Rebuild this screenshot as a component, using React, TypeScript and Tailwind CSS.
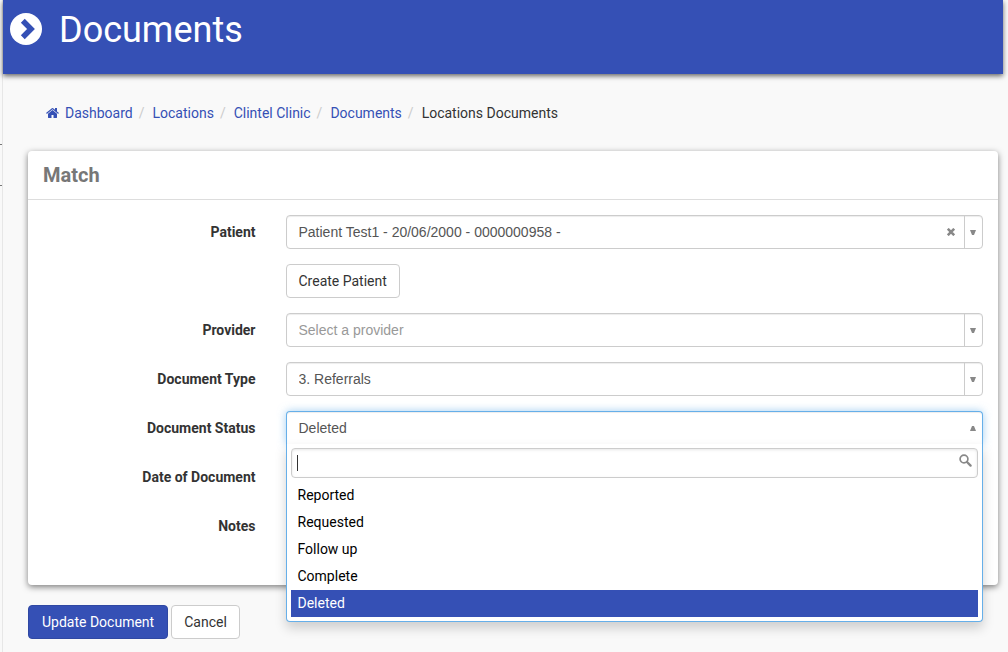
import { useState } from "react";
import type { ReactNode } from "react";

const crumbs = ["Locations", "Clintel Clinic", "Documents"];
const statuses = ["Reported", "Requested", "Follow up", "Complete", "Deleted"];

const fieldClass =
  "block h-[34px] w-full appearance-none rounded border border-[#ccc] bg-white pl-3 pr-8 font-['Liberation_Sans',Arial,sans-serif] text-sm shadow-[inset_0_1px_1px_rgba(0,0,0,0.075)] outline-none";

function ChevronCircle() {
  return (
    <svg width="32" height="32" viewBox="0 0 32 32" className="mt-[5px]" aria-hidden="true">
      <circle cx="16" cy="16" r="16" fill="#fff" />
      <path d="M12.800 7.800L21 16L12.800 24.200" fill="none" stroke="#3550b5" strokeWidth="5.5" />
    </svg>
  );
}

function HomeIcon() {
  return (
    <svg width="13" height="14" viewBox="0 0 1664 1792" fill="currentColor" aria-hidden="true">
      <path d="M1408 992v480q0 26-19 45t-45 19h-384v-384h-256v384h-384q-26 0-45-19t-19-45v-480q0-1 .5-3t.5-3l575-474 575 474q1 2 1 6zm223-69l-62 74q-8 9-21 11h-3q-13 0-21-7l-692-577-692 577q-12 8-24 7-13-2-21-11l-62-74q-8-10-7-23.5t11-21.5l719-599q32-26 76-26t76 26l244 204v-195q0-14 9-23t23-9h192q14 0 23 9t9 23v408l219 182q10 8 11 21.5t-7 23.5z" />
    </svg>
  );
}

function SearchIcon() {
  return (
    <svg
      width="13"
      height="13"
      viewBox="0 0 13 13"
      fill="none"
      stroke="#888"
      className="absolute right-[6px] top-[6px]"
      aria-hidden="true"
    >
      <circle cx="5" cy="5" r="3.900" strokeWidth="1.700" />
      <path d="M8 8L11.600 11.600" strokeWidth="2.300" strokeLinecap="round" />
    </svg>
  );
}

function ClearIcon() {
  return (
    <svg width="8" height="8" viewBox="0 0 8 8" stroke="#888" strokeWidth="2.600" aria-hidden="true">
      <path d="M0.800 0.800L7.200 7.200M7.200 0.800L0.800 7.200" />
    </svg>
  );
}

function Caret({ up = false }: { up?: boolean }) {
  return (
    <svg width="8" height="5" viewBox="0 0 8 5" fill="#888" aria-hidden="true">
      {up ? <path d="M3 0H5L7 5H1Z" /> : <path d="M1 0H7L5 5H3Z" />}
    </svg>
  );
}

function Row({ label, htmlFor, children }: { label?: string; htmlFor?: string; children: ReactNode }) {
  return (
    <div className="grid grid-cols-4">
      <div className="px-[15px] pt-[7px] text-right">
        {label && (
          <label htmlFor={htmlFor} className="block font-bold">
            {label}
          </label>
        )}
      </div>
      <div className="col-span-3 px-[15px]">{children}</div>
    </div>
  );
}

type SelectProps = {
  id: string;
  value: string;
  placeholder?: boolean;
  onClear?: () => void;
};

function Select({ id, value, placeholder, onClear }: SelectProps) {
  return (
    <div className="relative">
      <select id={id} defaultValue={value} className={`${fieldClass} ${placeholder ? "text-[#999]" : "text-[#555]"}`}>
        <option>{value}</option>
      </select>
      {onClear && (
        <button
          type="button"
          aria-label="Clear"
          onClick={onClear}
          className="absolute inset-y-0 right-[26px] flex w-3 items-center justify-center"
        >
          <ClearIcon />
        </button>
      )}
      <span className="pointer-events-none absolute inset-y-px right-px flex w-[18px] items-center border-l border-[#ccc] pl-1">
        <Caret />
      </span>
    </div>
  );
}

function StatusSelect() {
  const [open, setOpen] = useState(true);
  const [status, setStatus] = useState("Deleted");

  return (
    <div className="relative h-[34px]">
      <button
        id="status"
        type="button"
        aria-haspopup="listbox"
        aria-expanded={open}
        onClick={() => setOpen(!open)}
        className="flex h-[33px] w-full items-center justify-between rounded-t border border-b-0 border-[#66afe9] bg-white pl-3 pr-[5px] font-['Liberation_Sans',Arial,sans-serif] text-[#555] shadow-[inset_0_1px_1px_rgba(0,0,0,0.075),0_0_8px_rgba(102,175,233,0.6)]"
      >
        {status}
        <Caret up={open} />
      </button>
      {open && (
        <div className="absolute inset-x-0 top-[33px] z-10 rounded-b border border-t-0 border-[#66afe9] bg-white p-1 shadow-[0_6px_12px_rgba(0,0,0,0.175)]">
          <div className="relative">
            <input
              type="text"
              autoFocus
              aria-label="Search statuses"
              className="block h-[30px] w-full rounded border border-[#ccc] bg-white pl-[5px] pr-7 text-[#555] caret-transparent shadow-[inset_0_1px_3px_rgba(0,0,0,0.1)] outline-none"
            />
            <span className="pointer-events-none absolute left-[6px] top-[7px] h-4 w-px bg-[#333]" />
            <SearchIcon />
          </div>
          <ul role="listbox" className="mt-1">
            {statuses.map((item) => (
              <li
                key={item}
                role="option"
                aria-selected={item === status}
                onClick={() => setStatus(item)}
                className={item === status ? "h-[27px] bg-[#3550b5] px-[7px] leading-[26px] text-white" : "h-[27px] px-[7px] leading-[26px] text-black"}
              >
                {item}
              </li>
            ))}
          </ul>
        </div>
      )}
    </div>
  );
}

export default function App() {
  const [patient, setPatient] = useState("Patient Test1 - 20/06/2000 - 0000000958 -");

  return (
    <div className="flex min-h-screen overflow-hidden bg-[#f9f9f9] font-[Roboto,sans-serif] text-sm text-[#333]">
      <aside className="w-[3px] shrink-0 border-r border-[#e7e7e7] pt-36">
        <div className="h-[42px] border-y border-[#777]" />
      </aside>
      <main className="min-w-0 flex-1">
        <header className="mr-[5px] flex h-[74px] items-start gap-[17px] bg-[#3550b5] pl-[7px] pt-2 text-white shadow-[0_2px_5px_rgba(0,0,0,0.6)]">
          <ChevronCircle />
          <h1 className="text-4xl leading-[44px]">Documents</h1>
        </header>

        <div className="pl-[25px] pr-[10px]">
          <nav aria-label="Breadcrumb" className="px-[18px] pt-[29px]">
            <ol className="flex leading-5">
              <li>
                <a href="#" className="flex items-center gap-[6px] text-[#3550b5]">
                  <HomeIcon />
                  Dashboard
                </a>
              </li>
              {crumbs.map((crumb) => (
                <li key={crumb} className="before:pl-[6px] before:pr-2 before:text-[#ccc] before:content-['/']">
                  <a href="#" className="text-[#3550b5]">{crumb}</a>
                </li>
              ))}
              <li className="before:pl-[6px] before:pr-2 before:text-[#ccc] before:content-['/']">
                Locations Documents
              </li>
            </ol>
          </nav>

          <form onSubmit={(e) => e.preventDefault()}>
            <section className="mt-7 rounded-sm bg-white shadow-[0_2px_6px_rgba(0,0,0,0.5)]">
              <h2 className="border-b border-[#ddd] px-[15px] py-3 text-xl leading-6 font-bold text-[#777]">Match</h2>
              <div className="flex flex-col gap-[15px] pt-[15px] pb-[22px]">
                <Row label="Patient" htmlFor="patient">
                  <Select key={patient} id="patient" value={patient} onClear={() => setPatient("")} />
                </Row>
                <Row>
                  <button type="button" className="h-[34px] rounded border border-[#ccc] bg-white px-3">
                    Create Patient
                  </button>
                </Row>
                <Row label="Provider" htmlFor="provider">
                  <Select id="provider" value="Select a provider" placeholder />
                </Row>
                <Row label="Document Type" htmlFor="type">
                  <Select id="type" value="3. Referrals" />
                </Row>
                <Row label="Document Status" htmlFor="status">
                  <StatusSelect />
                </Row>
                <Row label="Date of Document" htmlFor="date">
                  <input id="date" type="text" className={fieldClass} />
                </Row>
                <Row label="Notes" htmlFor="notes">
                  <textarea id="notes" className="block h-[54px] w-full resize-none rounded border border-[#ccc] px-3" />
                </Row>
              </div>
            </section>

            <div className="mt-5 flex gap-[3px]">
              <button type="submit" className="h-[34px] rounded border border-[#2f48a3] bg-[#3550b5] px-[13px] text-white">
                Update Document
              </button>
              <button type="button" className="h-[34px] rounded border border-[#ccc] bg-white px-3">
                Cancel
              </button>
            </div>
          </form>
        </div>
      </main>
    </div>
  );
}
